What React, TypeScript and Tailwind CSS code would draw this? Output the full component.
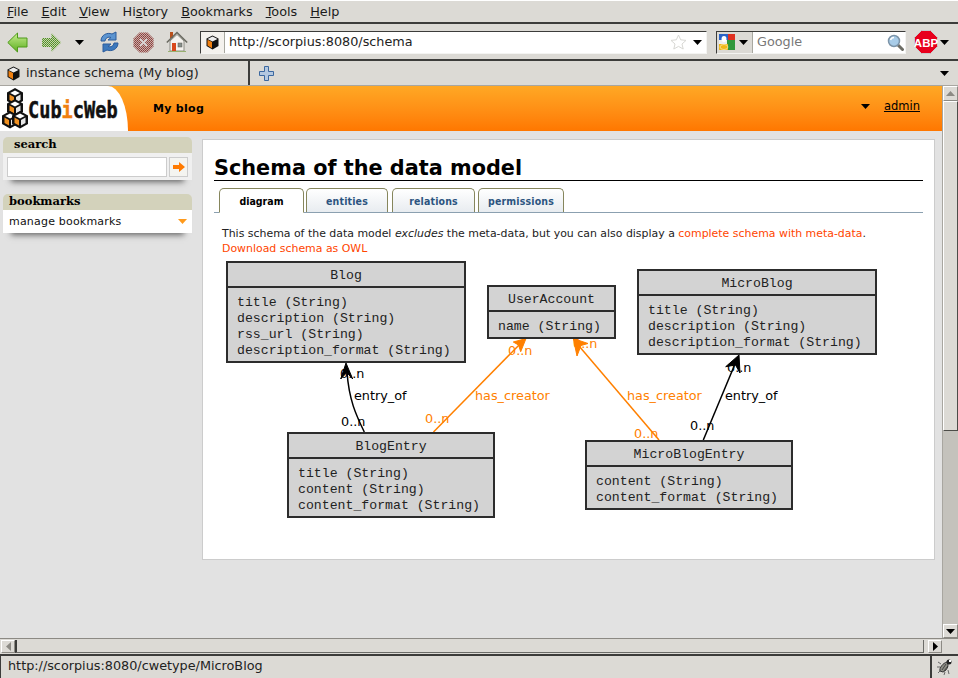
import type { ReactNode } from "react";

function Arrow({ className = "" }: { className?: string }) {
  return (
    <svg width="9" height="5" viewBox="0 0 9 5" className={className}>
      <path d="M0 0h9L4.500 5z" fill="#000" />
    </svg>
  );
}

function Cube() {
  return (
    <svg width="13" height="15" viewBox="0 0 13 15">
      <path d="M6.500 0.500L12.500 3.500V11L6.500 14.500L0.500 11V3.500z" fill="#111" />
      <path d="M6.500 1.500L11.500 4L6.500 6.500L1.500 4z" fill="#eee" />
      <path d="M1.500 4.800L6 7V13.200L1.500 10.600z" fill="#f08010" />
    </svg>
  );
}

function BackIcon() {
  return (
    <svg width="21" height="21" viewBox="0 0 21 21">
      <defs>
        <linearGradient id="bk" x1="0" y1="0" x2="0" y2="1">
          <stop offset="0" stopColor="#c8ee90" />
          <stop offset="1" stopColor="#5cae20" />
        </linearGradient>
      </defs>
      <path d="M0.800 10.500L10.500 1V6H20V15H10.500V20z" fill="url(#bk)" stroke="#4e9a1a" />
    </svg>
  );
}

function ForwardIcon() {
  return (
    <svg width="21" height="21" viewBox="0 0 21 21">
      <defs>
        <pattern id="dg" width="2" height="2" patternUnits="userSpaceOnUse">
          <rect width="2" height="2" fill="#c4d4ac" />
          <rect width="1" height="1" fill="#4e8a28" />
          <rect x="1" y="1" width="1" height="1" fill="#5f9a30" />
        </pattern>
      </defs>
      <path d="M20.200 10.500L10.500 1V6H1V15H10.500V20z" fill="url(#dg)" />
    </svg>
  );
}

function ReloadIcon() {
  return (
    <svg width="21" height="22" viewBox="0 0 21 22">
      <path d="M2 10C2 4 8 1 13 3L17 1V9H9L12 6.500C9 5.500 6.500 7 6 10z" fill="#5c94d0" stroke="#2c5c9c" strokeLinejoin="round" />
      <path d="M19 12C19 18 13 21 8 19L4 21V13H12L9 15.500C12 16.500 14.500 15 15 12z" fill="#3c78bc" stroke="#2c5c9c" strokeLinejoin="round" />
    </svg>
  );
}

function StopIcon() {
  return (
    <svg width="21" height="21" viewBox="0 0 21 21">
      <defs>
        <pattern id="dr" width="2" height="2" patternUnits="userSpaceOnUse">
          <rect width="2" height="2" fill="#c4b0ac" />
          <rect width="1" height="1" fill="#8c3c38" />
          <rect x="1" y="1" width="1" height="1" fill="#9c4c48" />
        </pattern>
      </defs>
      <path d="M6.500 0.500H14.500L20.500 6.500V14.500L14.500 20.500H6.500L0.500 14.500V6.500z" fill="url(#dr)" />
      <path d="M7 7L14 14M14 7L7 14" stroke="#d8d0d0" strokeWidth="2" />
    </svg>
  );
}

function HomeIcon() {
  return (
    <svg width="22" height="22" viewBox="0 0 22 22">
      <rect x="4" y="1" width="3" height="6" fill="#b8501c" />
      <path d="M4 10V20H18V10L11 3.500z" fill="#f4f2ee" stroke="#8c8c84" />
      <path d="M0.800 11.500L11 1.500L21.200 11.500" fill="none" stroke="#68685f" strokeWidth="1.500" />
      <rect x="6" y="12" width="4" height="8" fill="#d8481c" />
      <rect x="12" y="12" width="4" height="4" fill="#88908c" stroke="#585850" strokeWidth="0.500" />
      <rect x="2" y="20" width="18" height="1" fill="#98b070" />
    </svg>
  );
}

function StarIcon() {
  return (
    <svg width="17" height="16" viewBox="0 0 17 16">
      <path d="M8.500 1L10.700 5.800L16 6.400L12 10L13.200 15L8.500 12.400L3.800 15L5 10L1 6.400L6.300 5.800z" fill="#fff" stroke="#d8d8d4" />
    </svg>
  );
}

function GoogleIcon() {
  return (
    <svg width="16" height="16" viewBox="0 0 16 16">
      <rect width="16" height="16" rx="1.500" fill="#eee" />
      <path d="M0 0H9V6H0z" fill="#2a62c8" />
      <path d="M9 0H16V6H9z" fill="#e03020" />
      <path d="M8 6H16V16H8z" fill="#30983c" />
      <path d="M0 10H9V16H0z" fill="#f0b818" />
      <ellipse cx="5" cy="5" rx="2.500" ry="3" fill="#fff" />
      <ellipse cx="5" cy="13" rx="4" ry="2.500" fill="#f0b818" stroke="#fff" strokeWidth="0.500" />
    </svg>
  );
}

function GlassIcon() {
  return (
    <svg width="17" height="17" viewBox="0 0 17 17">
      <path d="M10.500 10.500L15.500 15.500" stroke="#6c6c64" strokeWidth="3" strokeLinecap="round" />
      <circle cx="7" cy="7" r="5.500" fill="#a8cce8" stroke="#7c94a8" strokeWidth="1.500" />
      <path d="M3.500 6C4 4.500 5.500 3.500 7 3.500" stroke="#fff" fill="none" strokeWidth="1.500" />
    </svg>
  );
}

function AbpIcon() {
  return (
    <svg width="24" height="24" viewBox="0 0 24 24">
      <path d="M7.500 0.500H16.500L23.500 7.500V16.500L16.500 23.500H7.500L0.500 16.500V7.500z" fill="#e8001c" stroke="#c8c8c8" />
      <text x="12" y="16.500" textAnchor="middle" fontFamily="Liberation Sans" fontWeight="700" fontSize="11.500" fill="#fff">ABP</text>
    </svg>
  );
}

function BugIcon() {
  return (
    <svg width="18" height="18" viewBox="0 0 18 18">
      <path d="M5 6L2 4M4 9L1 9M5 12L2 15M9 14L8 17M12 12L13 16" stroke="#666" strokeWidth="1" />
      <path d="M4 13C3 10 7 5 11 4C13 6 12 12 7 14z" fill="#8c8c84" stroke="#333" />
      <path d="M6 12L10 6M8 13L12 8" stroke="#333" strokeWidth="0.800" />
      <circle cx="13" cy="4" r="2.500" fill="#222" />
      <rect x="13" y="2" width="2" height="2" fill="#fff" />
    </svg>
  );
}

function PlusIcon() {
  return (
    <svg width="15" height="15" viewBox="0 0 15 15">
      <path d="M5.500 0.500H9.500V5.500H14.500V9.500H9.500V14.500H5.500V9.500H0.500V5.500H5.500z" fill="#b4c8e0" stroke="#3c68a0" />
    </svg>
  );
}

function LogoCubes() {
  const cube = (x: number, y: number) => (
    <g transform={`translate(${x} ${y})`}>
      <path d="M8 0L16 4.500V13L8 17.500L0 13V4.500z" fill="#111" />
      <path d="M8 2.500L12.800 5L8 7.500L3.200 5z" fill="#fff" />
      <path d="M2.500 6.500L7 9V14.500L2.500 12z" fill="#f09020" />
      <path d="M13.500 6.500L9 9V14.500L13.500 12z" fill="#e8e8e8" />
    </g>
  );
  return (
    <svg width="26" height="41" viewBox="0 0 26 41">
      {cube(5, 0)}
      {cube(5, 11)}
      {cube(0, 23)}
      {cube(10, 23)}
    </svg>
  );
}

function ChromeArrowBtn({ children, className = "" }: { children: ReactNode; className?: string }) {
  return (
    <div className={`flex items-center justify-center bg-[#dcdad5] border border-[#8c8a84] border-t-white border-l-white ${className}`}>
      {children}
    </div>
  );
}

function UmlNode({ name, attrs, className }: { name: string; attrs: string[]; className: string }) {
  return (
    <div className={`absolute bg-[#d3d3d3] border-2 border-[#2c2c2c] font-['Liberation_Mono',monospace] text-[13.2px] text-[#222] ${className}`}>
      <div className="h-[25px] pt-[2px] flex items-center justify-center border-b-2 border-[#2c2c2c]">{name}</div>
      <div className="pl-[9px] pt-[7px] leading-[16px] whitespace-pre">
        {attrs.map((a) => (
          <div key={a}>{a}</div>
        ))}
      </div>
    </div>
  );
}

function EdgeLabel({ text, className }: { text: string; className: string }) {
  return <span className={`absolute font-['DejaVu_Sans',sans-serif] text-[12.8px] leading-[16px] whitespace-nowrap ${className}`}>{text}</span>;
}

function Diagram() {
  return (
    <div className="relative w-[660px] h-[262px]">
      <EdgeLabel text="0..n" className="left-[118px] top-[108px] text-black" />
      <EdgeLabel text="entry_of" className="left-[132px] top-[130px] text-black" />
      <EdgeLabel text="0..n" className="left-[119px] top-[156px] text-black" />
      <EdgeLabel text="0..n" className="left-[286px] top-[85px] text-[#ff8000]" />
      <EdgeLabel text="has_creator" className="left-[253px] top-[130px] text-[#ff8000]" />
      <EdgeLabel text="0..n" className="left-[203px] top-[153px] text-[#ff8000]" />
      <EdgeLabel text="0..n" className="left-[351px] top-[78px] text-[#ff8000]" />
      <EdgeLabel text="has_creator" className="left-[405px] top-[130px] text-[#ff8000]" />
      <EdgeLabel text="0..n" className="left-[412px] top-[168px] text-[#ff8000]" />
      <EdgeLabel text="0..n" className="left-[505px] top-[102px] text-black" />
      <EdgeLabel text="entry_of" className="left-[503px] top-[130px] text-black" />
      <EdgeLabel text="0..n" className="left-[468px] top-[160px] text-black" />

      <svg className="absolute left-0 top-0" width="660" height="262" viewBox="222 258 660 262" fill="none">
        <path d="M364.300 432C356 415 349 400 347 372" stroke="#000" strokeWidth="1.500" />
        <path d="M346 363L352.700 379L346.800 372.500L340.700 379z" fill="#000" stroke="#000" />
        <path d="M433.500 432L521 343" stroke="#ff8000" strokeWidth="1.500" />
        <path d="M526 338.500L520.700 351.700L518.500 345L513.300 342z" fill="#ff8000" stroke="#ff8000" />
        <path d="M659 440L579 346" stroke="#ff8000" strokeWidth="1.500" />
        <path d="M573.300 338.500L588 343.500L581 345.500L577 356z" fill="#ff8000" stroke="#ff8000" />
        <path d="M703.300 440L735 364" stroke="#000" strokeWidth="1.500" />
        <path d="M739 355L740 373L735.500 365L725.700 366.700z" fill="#000" stroke="#000" />
      </svg>

      <UmlNode
        name="Blog"
        attrs={["title (String)", "description (String)", "rss_url (String)", "description_format (String)"]}
        className="left-[4px] top-[3px] w-[240px] h-[102px]"
      />
      <UmlNode name="UserAccount" attrs={["name (String)"]} className="left-[265px] top-[27px] w-[129px] h-[54px]" />
      <UmlNode
        name="BlogEntry"
        attrs={["title (String)", "content (String)", "content_format (String)"]}
        className="left-[65px] top-[174px] w-[208px] h-[86px]"
      />
      <UmlNode
        name="MicroBlog"
        attrs={["title (String)", "description (String)", "description_format (String)"]}
        className="left-[415px] top-[11px] w-[240px] h-[86px]"
      />
      <UmlNode
        name="MicroBlogEntry"
        attrs={["content (String)", "content_format (String)"]}
        className="left-[363px] top-[182px] w-[208px] h-[70px]"
      />
    </div>
  );
}

const tabs = [
  { label: "entities", cls: "w-[82px] ml-[2px]" },
  { label: "relations", cls: "w-[83px] ml-[4px]" },
  { label: "permissions", cls: "w-[86px] ml-[3px]" },
];

export default function App() {
  return (
    <div className="w-[958px] h-[678px] overflow-hidden flex flex-col bg-[#dcdad5] font-['DejaVu_Sans',sans-serif] text-black">
      {/* Menu bar */}
      <div className="h-[22px] shrink-0 flex items-center pl-[7px] gap-[13px] text-[12.8px] text-[#1a1a1a] border-t border-white">
        <span><u>F</u>ile</span>
        <span><u>E</u>dit</span>
        <span><u>V</u>iew</span>
        <span>Hi<u>s</u>tory</span>
        <span><u>B</u>ookmarks</span>
        <span><u>T</u>ools</span>
        <span><u>H</u>elp</span>
      </div>

      {/* Toolbar */}
      <div className="h-[39px] shrink-0 pt-[1px] border-t-2 border-t-[#3c3c3a] border-b-2 border-b-[#3c3c3a] flex items-center relative">
        <div className="ml-[7px] w-[21px] flex"><BackIcon /></div>
        <div className="ml-[13px] w-[21px] flex"><ForwardIcon /></div>
        <Arrow className="ml-[13px]" />
        <div className="ml-[15px] flex"><ReloadIcon /></div>
        <div className="ml-[13px] flex"><StopIcon /></div>
        <div className="ml-[12px] flex"><HomeIcon /></div>
        <div className="ml-[12px] w-[507px] h-[23px] bg-white flex items-center border border-[#f4f4f2] border-t-[#3c3c3a] border-l-[#3c3c3a]">
          <div className="w-[24px] h-full flex items-center justify-center border-r border-[#a8a8a0] bg-[#f4f2ee]"><Cube /></div>
          <span className="ml-[4px] text-[12.8px] text-[#222] flex-1">http://scorpius:8080/schema</span>
          <StarIcon />
          <Arrow className="ml-[6px] mr-[4px]" />
        </div>
        <div className="ml-[9px] w-[190px] h-[23px] bg-white flex items-center border border-[#f4f4f2] border-t-[#3c3c3a] border-l-[#3c3c3a]">
          <div className="w-[36px] h-full flex items-center pl-[2px] gap-[4px] border-r border-[#a8a8a0] bg-[#dcdad5]">
            <GoogleIcon />
            <Arrow />
          </div>
          <span className="ml-[4px] text-[12.8px] text-[#777] flex-1">Google</span>
          <div className="mr-[1px] flex"><GlassIcon /></div>
        </div>
        <div className="ml-[8px] flex"><AbpIcon /></div>
        <Arrow className="ml-[2px]" />
      </div>

      {/* Tab strip */}
      <div className="h-[25px] shrink-0 flex items-center border-b border-[#a8a6a0]">
        <div className="w-[250px] h-full flex items-center pl-[7px] gap-[6px] border-r-2 border-[#3c3c3a] text-[12.8px] text-[#222]">
          <Cube />
          <span>instance schema (My blog)</span>
        </div>
        <div className="ml-[9px] flex"><PlusIcon /></div>
        <Arrow className="ml-auto mr-[9px]" />
      </div>

      {/* Page + vertical scrollbar */}
      <div className="flex flex-1 min-h-0">
        <div className="flex-1 min-w-0 bg-[#e2e2e2] flex flex-col overflow-hidden">
          <header className="h-[45px] shrink-0 bg-gradient-to-b from-[#ffa824] to-[#ff7700] flex items-center relative">
            <div className="w-[128px] h-full bg-white rounded-tr-[20px_45px] flex items-center pl-[2px]">
              <LogoCubes />
              <span className="mt-[5px] scale-y-125 font-['DejaVu_Sans_Mono',monospace] font-bold text-[18.6px] leading-none text-[#111] [-webkit-text-stroke:0.4px_#111]">
                Cub<span className="text-[#f08010] [-webkit-text-stroke:0.4px_#f08010]">i</span>cWeb
              </span>
            </div>
            <span className="ml-[25px] mt-[1px] font-bold text-[11px] tracking-[0.3px]">My blog</span>
            <Arrow className="ml-auto mb-[4px]" />
            <a className="ml-[14px] mr-[22px] mb-[4px] text-[11.5px] underline">admin</a>
          </header>

          <div className="flex flex-1 min-h-0 mt-[6px]">
            {/* Sidebar */}
            <aside className="w-[189px] ml-[3px] flex flex-col">
              <div className="shadow-[0_10px_6px_-8px_#666]">
                <div className="h-[16px] bg-[#d3d2bb] rounded-t-[5px] pl-[11px] font-['DejaVu_Serif',serif] font-bold text-[11.5px] leading-[15px]">search</div>
                <div className="h-[27px] bg-[#f0f0f0] flex items-center pl-[4px] gap-[2px]">
                  <div className="w-[160px] h-[20px] bg-white border border-[#cccccc]" />
                  <div className="w-[19px] h-[20px] bg-[#f4f4f0] border border-[#cccccc] flex items-center justify-center">
                    <svg width="12" height="10" viewBox="0 0 12 10"><path d="M0 3H6V0L12 5L6 10V7H0z" fill="#ff7a00" /></svg>
                  </div>
                </div>
              </div>
              <div className="mt-[14px] shadow-[0_10px_6px_-8px_#666]">
                <div className="h-[16px] bg-[#d3d2bb] rounded-t-[5px] pl-[6px] font-['DejaVu_Serif',serif] font-bold text-[11.5px] leading-[15px]">bookmarks</div>
                <div className="h-[23px] bg-white flex items-center pl-[6px] pr-[5px] text-[11px] text-[#111] tracking-[0.2px]">
                  <span className="flex-1 pt-[2px]">manage bookmarks</span>
                  <svg width="9" height="5" viewBox="0 0 9 5"><path d="M0 0h9L4.500 5z" fill="#ff9a1c" /></svg>
                </div>
              </div>
            </aside>

            {/* Content panel */}
            <main className="ml-[10px] w-[733px] h-[421px] bg-white border border-[#cccccc] mt-[2px] pl-[11px] pr-[11px] pt-[13px]">
              <h1 className="h-[28px] font-bold text-[20.8px] leading-[30px] border-b border-black">Schema of the data model</h1>
              <div className="flex mt-[7px] pl-[5px] h-[25px] border-b border-[#8ba0b0]">
                <div className="w-[85px] h-[25px] pt-[2px] bg-white border border-[#86865c] border-b-white rounded-t-[5px] flex items-center justify-center font-bold text-[10.5px] [font-stretch:condensed] text-black">diagram</div>
                {tabs.map((t) => (
                  <div key={t.label} className={`h-[24px] pt-[3px] bg-gradient-to-b from-white to-[#e8ecf0] border border-b-0 border-[#86865c] rounded-t-[5px] flex items-center justify-center font-bold text-[10.5px] tracking-[0.15px] [font-stretch:condensed] text-[#2c5480] ${t.cls}`}>
                    {t.label}
                  </div>
                ))}
              </div>
              <div className="pl-[8px] pt-[13px] text-[10.93px] leading-[15px] text-[#222] whitespace-nowrap">
                <div>
                  This schema of the data model <em>excludes</em> the meta-data, but you can also display a{" "}
                  <a className="text-[#ff4500]">complete schema with meta-data</a>.
                </div>
                <a className="text-[#ff4500]">Download schema as OWL</a>
              </div>
              <div className="ml-[8px] mt-[2px]">
                <Diagram />
              </div>
            </main>
          </div>
        </div>

        {/* Vertical scrollbar */}
        <div className="w-[16px] flex flex-col bg-[#c4c2bc] border-l border-[#a8a6a0]">
          <ChromeArrowBtn className="h-[15px]">
            <svg width="9" height="5" viewBox="0 0 9 5"><path d="M0 5h9L4.500 0z" fill="#8c8a84" /></svg>
          </ChromeArrowBtn>
          <div className="h-[330px] bg-[#dcdad5] border border-[#4c4c48] border-t-white border-l-white" />
          <div className="flex-1" />
          <ChromeArrowBtn className="h-[14px]">
            <Arrow />
          </ChromeArrowBtn>
        </div>
      </div>

      {/* Horizontal scrollbar */}
      <div className="h-[15px] shrink-0 flex items-center border-t border-[#8c8a84] pl-[1px] pr-[16px]">
        <ChromeArrowBtn className="w-[14px] h-[13px]">
          <svg width="5" height="9" viewBox="0 0 5 9"><path d="M5 0v9L0 4.500z" fill="#8c8a84" /></svg>
        </ChromeArrowBtn>
        <div className="flex-1 h-[13px] border-l-2 border-[#3c3c3a] border-b border-b-[#6c6c68] border-r border-r-[#6c6c68]" />
        <ChromeArrowBtn className="ml-[4px] w-[14px] h-[13px]">
          <svg width="5" height="9" viewBox="0 0 5 9"><path d="M0 0v9L5 4.500z" fill="#000" /></svg>
        </ChromeArrowBtn>
      </div>

      {/* Status bar */}
      <div className="h-[24px] shrink-0 flex border-t-2 border-t-[#3c3c3a] mt-[1px]">
        <div className="flex-1 flex items-center pl-[7px] pb-[2px] text-[12.8px] text-[#222] border-l border-[#3c3c3a]">http://scorpius:8080/cwetype/MicroBlog</div>
        <div className="w-[28px] flex items-center justify-center border-l-2 border-[#3c3c3a]"><BugIcon /></div>
      </div>
    </div>
  );
}
